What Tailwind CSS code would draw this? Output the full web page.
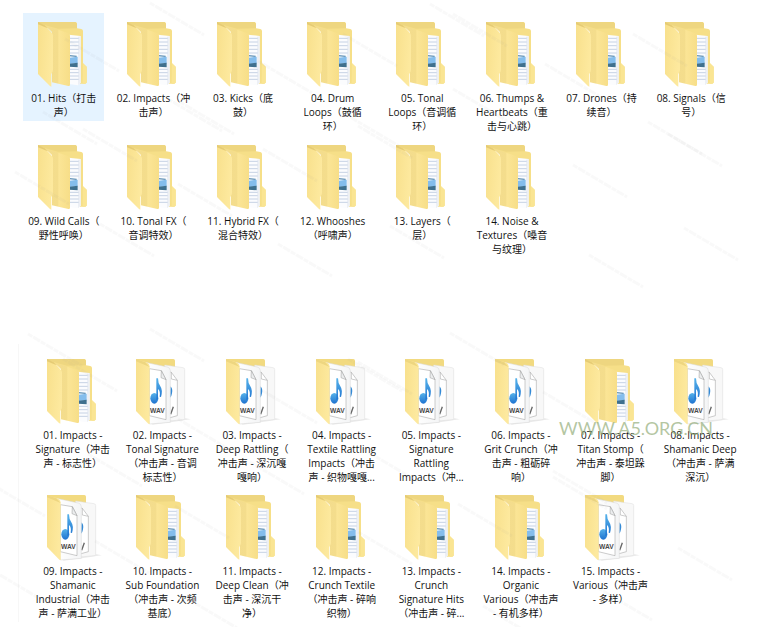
<!DOCTYPE html>
<html lang="zh-CN">
<head>
    <meta charset="UTF-8">
    <meta name="viewport" content="width=device-width, initial-scale=1.0">
    <title>Sound Library</title>
    <script src="https://cdn.jsdelivr.net/npm/@tailwindcss/browser@4"></script>
</head>
<body class="relative min-h-screen overflow-x-hidden bg-white text-[#111] font-['Open_Sans','Noto_Sans_CJK_SC',sans-serif]">

    <!-- Icon sprites -->
    <svg class="absolute w-0 h-0" aria-hidden="true">
        <defs>
            <linearGradient id="side" x1="0" x2="1" y1="0" y2="0.3">
                <stop offset="0" stop-color="#f8e08c" />
                <stop offset="1" stop-color="#fde99e" />
            </linearGradient>
            <linearGradient id="flap" x1="0" x2="1" y1="0" y2="0">
                <stop offset="0" stop-color="#f3dc8e" />
                <stop offset="0.52" stop-color="#f4dd8c" />
                <stop offset="0.56" stop-color="#fbe596" />
                <stop offset="1" stop-color="#f7de88" />
            </linearGradient>
            <linearGradient id="note" x1="0" x2="0" y1="0" y2="1">
                <stop offset="0" stop-color="#56b2ea" />
                <stop offset="1" stop-color="#1f73d0" />
            </linearGradient>
            <linearGradient id="sheet" x1="0" x2="1" y1="0" y2="0">
                <stop offset="0" stop-color="#ffffff" />
                <stop offset="1" stop-color="#f4f5f6" />
            </linearGradient>
        </defs>

        <symbol id="folder" viewBox="0 0 150 198">
            <path d="M0 0H112Q117 0 117 5V19L130 21Q135 22 135 27V124L146 134V182L142 185H96V40L0 8Z" fill="#f6df88" />
            <path d="M135 124L146 134V182L142 185H134Z" fill="#fae593" />
            <path d="M0 0H112L117 5V19L60 20L0 4Z" fill="#eed680" />
            <path d="M92 38L128 42V182L120 190L92 186Z" fill="#fbfcfe" />
            <path d="M120 44L128 43V182L120 190Z" fill="#eceff5" />
            <path d="M96 49H122M96 60H122M96 71H122M96 82H122M96 93H122M96 142H122M96 152H122M96 162H122M96 172H122" stroke="#c6d2e4" stroke-width="3" />
            <path d="M94 99L116 101V105L94 103Z" fill="#5d8fb5" />
            <path d="M94 107L119 104V124L94 126Z" fill="#84bdec" />
            <path d="M94 125L119 122V136L94 134Z" fill="#3f708e" />
            <path d="M20 10L90 33Q96 35 96 41V188Q96 193 91 192L42 181V30Z" fill="url(#flap)" />
            <path d="M0 2Q16 6 26 16L42 33Q45 36 45 41V143Q45 148 42 152L40 157V194L36 192L0 156Z" fill="url(#side)" />
            <path d="M0 0L20 10L29 19L0 7Z" fill="#e5cb75" />
        </symbol>

        <symbol id="wav-folder" viewBox="0 0 165 198">
            <path d="M38 190L150 178L164 181L104 190L50 197Z" fill="#dddddd" opacity="0.6" />
            <path d="M0 0H112Q117 0 117 5V40H10Z" fill="#f2da80" />
            <path d="M86 18L141 26Q146 27 146 31V179Q146 182 141 182L90 187Z" fill="#f8f8f8" stroke="#dcdcdc" stroke-width="1.5" />
            <path d="M88 36L106 40L124 64V170L88 180Z" fill="#fff" stroke="#999" stroke-width="1.5" />
            <path d="M106 40V60L124 64" fill="none" stroke="#999" stroke-width="1.5" />
            <path d="M103 82Q111 88 108 103Q107 112 102 116Z" fill="#348ad6" />
            <path d="M104 166L112 143" stroke="#666" stroke-width="4" />
            <path d="M28 10L94 24Q103 26 103 35V190L40 195Z" fill="url(#sheet)" stroke="#d6d6d6" stroke-width="1.5" />
            <path d="M40 29L76 35L90 62V182L40 170Z" fill="#fff" stroke="#999" stroke-width="1.5" />
            <path d="M76 35L75 56L90 62Z" fill="#eceeef" stroke="#999" stroke-width="1.5" />
            <ellipse cx="55" cy="118" rx="12" ry="16" fill="url(#note)" />
            <path d="M61 58H66Q66 73 73 82Q81 93 75 114L71 113Q74 97 66 90V120L61 124Z" fill="url(#note)" />
            <text x="42" y="162" font-family="Liberation Sans, sans-serif" font-size="20" font-weight="700" fill="#4a4a4a">WAV</text>
            <path d="M0 1L31 10Q41 14 41 24V195L37 194L0 156Z" fill="url(#side)" />
            <path d="M0 0L28 10L41 24L0 7Z" fill="#eed680" />
        </symbol>
    </svg>

    <main class="pt-[13px]">
        <!-- Top level folders -->
        <ul id="categories" class="grid grid-cols-8 gap-y-px pl-[19px] pr-[31px]"></ul>

        <!-- Impacts subfolders -->
        <ul id="impacts" class="grid grid-cols-8 mt-[86px] ml-[18px] pt-1.5 pl-[9px] pr-[22px] border-l border-[#f7f7f7]"></ul>
    </main>

    <!-- Watermarks -->
    <svg id="marks" class="absolute inset-0 w-full h-full pointer-events-none" aria-hidden="true"></svg>
    <p class="absolute left-[559px] top-[416px] text-[18px] leading-6 text-[#93ad79]/70 font-['Lato',sans-serif] whitespace-nowrap pointer-events-none">WWW.A5.ORG.CN</p>

    <script>
        const categories = [
            { lines: ["01. Hits（打击", "声）"], selected: true },
            { lines: ["02. Impacts（冲", "击声）"] },
            { lines: ["03. Kicks（底", "鼓）"] },
            { lines: ["04. Drum", "Loops（鼓循", "环）"] },
            { lines: ["05. Tonal", "Loops（音调循", "环）"] },
            { lines: ["06. Thumps &amp;", "Heartbeats（重", "击与心跳）"] },
            { lines: ["07. Drones（持", "续音）"] },
            { lines: ["08. Signals（信", "号）"] },
            { lines: ["09. Wild Calls（", "野性呼唤）"] },
            { lines: ["10. Tonal FX（", "音调特效）"] },
            { lines: ["11. Hybrid FX（", "混合特效）"] },
            { lines: ["12. Whooshes", "（呼啸声）"] },
            { lines: ["13. Layers（", "层）"] },
            { lines: ["14. Noise &amp;", "Textures（嗓音", "与纹理）"] },
        ];

        const impacts = [
            { lines: ["01. Impacts -", "Signature（冲击", "声 - 标志性）"] },
            { lines: ["02. Impacts -", "Tonal Signature", "（冲击声 - 音调", "标志性）"], wav: true },
            { lines: ["03. Impacts -", "Deep Rattling（", "冲击声 - 深沉嘎", "嘎响）"], wav: true },
            { lines: ["04. Impacts -", "Textile Rattling", "Impacts（冲击", "声 - 织物嘎嘎..."], wav: true },
            { lines: ["05. Impacts -", "Signature", "Rattling", "Impacts（冲..."], wav: true },
            { lines: ["06. Impacts -", "Grit Crunch（冲", "击声 - 粗砺碎", "响）"], wav: true },
            { lines: ["07. Impacts -", "Titan Stomp（", "冲击声 - 泰坦跺", "脚）"] },
            { lines: ["08. Impacts -", "Shamanic Deep", "（冲击声 - 萨满", "深沉）"], wav: true },
            { lines: ["09. Impacts -", "Shamanic", "Industrial（冲击", "声 - 萨满工业）"], wav: true },
            { lines: ["10. Impacts -", "Sub Foundation", "（冲击声 - 次频", "基底）"] },
            { lines: ["11. Impacts -", "Deep Clean（冲", "击声 - 深沉干", "净）"] },
            { lines: ["12. Impacts -", "Crunch Textile", "（冲击声 - 碎响", "织物）"] },
            { lines: ["13. Impacts -", "Crunch", "Signature Hits", "（冲击声 - 碎..."] },
            { lines: ["14. Impacts -", "Organic", "Various（冲击声", "- 有机多样）"] },
            { lines: ["15. Impacts -", "Various（冲击声", "- 多样）"], wav: true },
        ];

        function render(id, items) {
            document.getElementById(id).innerHTML = items.map(item => `
                <li class="flex justify-center items-start">
                    <button type="button" class="w-[81px] pt-[9px] pb-0.5 flex flex-col items-center gap-[3px] ${item.selected ? "bg-[#e5f3ff]" : "hover:bg-[#e5f3ff]"}">
                        <span class="w-[52px] flex">
                            ${item.wav
                                ? `<svg class="w-[55px] h-[66px] shrink-0" aria-hidden="true"><use href="#wav-folder" /></svg>`
                                : `<svg class="w-[50px] h-[66px] shrink-0" aria-hidden="true"><use href="#folder" /></svg>`}
                        </span>
                        <span class="text-[10px] leading-[14px] text-center whitespace-nowrap">${item.lines.join("<br>")}</span>
                    </button>
                </li>
            `).join("");
        }

        render("categories", categories);
        render("impacts", impacts);

        // centre points of the faint diagonal marks
        const points = [
            [177, 19], [92, 55], [195, 115], [70, 128], [457, 20], [285, 77], [370, 50], [207, 118], [372, 130],
            [480, 30], [572, 80], [660, 50], [675, 138], [480, 105], [110, 145], [42, 188], [205, 200], [290, 165],
            [127, 240], [305, 260], [695, 150], [600, 181], [711, 244], [616, 271], [385, 142], [417, 242],
            [55, 350], [90, 375], [177, 345], [375, 375], [290, 407], [205, 435], [277, 478], [115, 470],
            [477, 349], [385, 378], [390, 465], [570, 408], [580, 487], [18, 500], [202, 522], [22, 588],
            [122, 557], [385, 548], [210, 612], [580, 493], [485, 520], [705, 564], [625, 604], [510, 622],
        ];
        document.getElementById("marks").innerHTML = points.map(([x, y]) =>
            `<path d="M${x - 27} ${y - 16}L${x + 27} ${y + 16}" stroke="#999" stroke-opacity="0.06" stroke-width="3" stroke-dasharray="5 1 8 1" />`
        ).join("");
    </script>

</body>
</html>
